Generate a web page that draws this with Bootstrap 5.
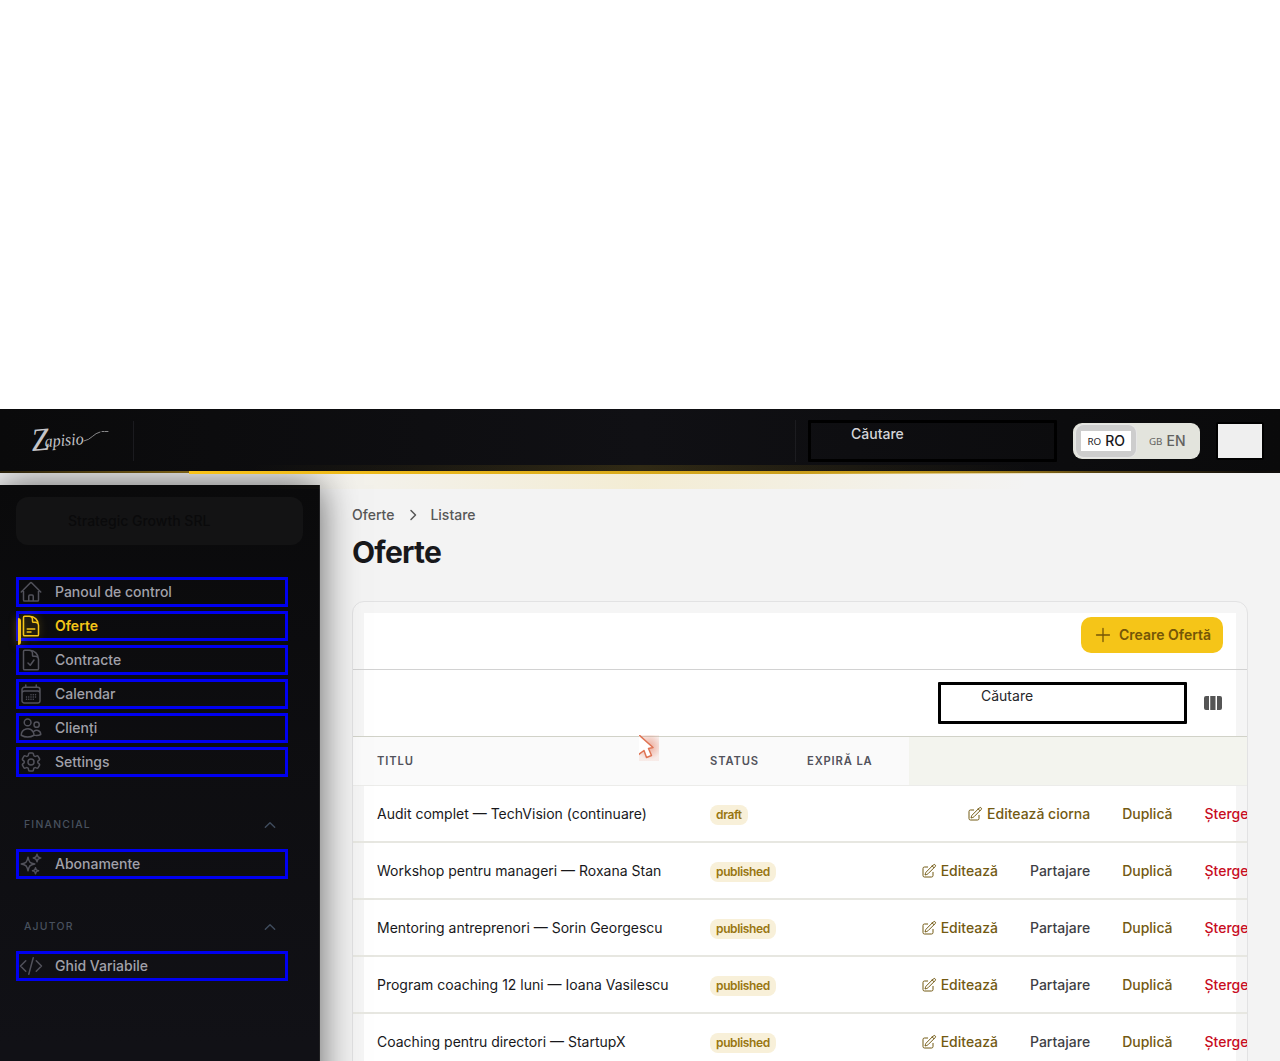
<!DOCTYPE html>
<html lang="ro">
<head>
<meta charset="utf-8">
<meta name="viewport" content="width=device-width, initial-scale=1">
<title>Oferte</title>
<link href="https://cdn.jsdelivr.net/npm/bootstrap@5.3.0/dist/css/bootstrap.min.css" rel="stylesheet">
<style>
html,body{height:1061px;overflow:hidden}
body{font-family:Inter,sans-serif;font-size:14px;line-height:20px;background:#fff;color:#18181b}
svg{fill:none;stroke:currentColor;stroke-width:1.5;stroke-linecap:round;stroke-linejoin:round;flex-shrink:0}
a{text-decoration:none;color:inherit}
.page-top{height:409px}
.topbar{height:64px;background:linear-gradient(90deg,#0a0a0b,#101014 50%,#0a0a0b);z-index:3}
.topbar::before{content:"";position:absolute;left:0;right:0;bottom:0;height:2px;background:linear-gradient(90deg,#2a210b,#7a6017 189px,#ecb91a 190px,#d9a91c 55%,#c99e1c 65%,#6d5516 82%,#0f0d0b 98%)}
.topbar::after{content:"";position:absolute;left:189px;width:900px;bottom:-1px;height:3px;background:linear-gradient(90deg,#f9c31a,#e0b01c 40%,#c99e1c 68%,rgba(201,158,28,0))}
.glow{left:250px;width:780px;top:56px;height:24px;background:linear-gradient(90deg,rgba(245,197,24,0),rgba(245,197,24,.05) 20%,rgba(245,197,24,.14) 50%,rgba(245,197,24,.05) 80%,rgba(245,197,24,0));pointer-events:none}
.brand{width:134px;height:40px;margin-top:12px;border-right:1px solid #1b1b1f;padding-left:28px}
.brand text{font-family:"Liberation Serif",serif;font-style:italic;fill:#c4c4c8;stroke:none}
.top-tools{padding:11px 16px 0 0}
.vline{width:1px;height:42px;background:#1c1c20;margin-right:12px}
.find-box{width:249px;height:42px;border:3px solid #000;border-radius:1px;padding:1px 40px}
.top-tools .find-box{color:#d4d4d8;font-weight:500;margin-right:16px}
.locale{width:127px;height:36px;margin:3px 16px 0 0;padding:2px 3px;border-radius:9px;background:#e3e4dd;font-weight:500;color:#62625f}
.locale small{font-family:"Noto Sans",sans-serif;font-size:9.8px;font-weight:400;margin-right:4px;line-height:20px;position:relative;top:1px}
.locale-on{width:60px;height:32px;border-radius:8px;background:linear-gradient(#fff,#fff) 5px 6px/50px 20px no-repeat,#cdcdcd;box-shadow:0 0 0 1px #e6e6e6;color:#18181b;padding-left:1px}
.locale-off{width:62px;padding-left:2px}
.user-btn{width:48px;height:38px;margin-top:2px;background:#efefef;border:2px solid #000;border-radius:2px;padding:0}
.main-area{height:588px;background:#f3f3f3;overflow:hidden}
.side{width:320px;height:620px;margin-top:12px;background:linear-gradient(180deg,#0a0a0b,#111116 90%);border-right:1px solid #202022;box-shadow:0 0 36px rgba(0,0,0,.62);z-index:1;padding:12px 16px}
.tenant{width:287px;height:48px;border-radius:12px;background:#131314;color:#0a0a0b;font-weight:500;padding:14px 52px;margin-bottom:32px}
.side-link{width:272px;height:30px;border:3px solid #0000f0;color:#a1a1aa;font-weight:500;margin-bottom:4px;gap:12px}
.side-link svg{color:#52525b}
.side-link.on{color:#f5c518;font-weight:600;position:relative}
.side-link.on svg{color:#f5c518;filter:drop-shadow(0 0 4px rgba(245,197,24,.4))}
.side-link.on::before{content:"";position:absolute;left:-1px;top:4px;width:3px;height:27px;background:#f9c31a;box-shadow:0 0 8px rgba(245,197,24,.5);border-radius:0 4px 4px 0}
.side-head{width:272px;height:20px;padding:0 10px 0 8px;color:#48515e;font-size:10.4px;font-weight:500;letter-spacing:1.25px;margin:38px 0 14px}
.side-head svg{color:#3f4b5c;stroke-width:2.2;position:relative;top:-.5px}
.content-col{width:960px;padding:32px 32px 0}
.crumb{color:#575757;font-weight:500;gap:8px}
h1.page-name{font-size:30px;line-height:36px;font-weight:700;letter-spacing:-.75px;margin:9px 0 31px}
.panel{width:896px;height:520px;border:1px solid #e2e2e3;border-radius:12px;overflow:hidden;background:linear-gradient(#fff,#fff) 11px 11px/872px 600px no-repeat,#f5f5f5}
.panel-head{height:68px;border-bottom:1px solid #d2d2d2;padding:15px 24px 0}
.btn-create{width:142px;height:36px;background:#f5c518;color:#745607;font-size:14px;font-weight:600;line-height:20px;border-radius:10px;padding:8px 12px;border:0;gap:6px;white-space:nowrap}
.panel-tools{height:67px;border-bottom:1px solid #d1d2c8;padding:12px 24px 0}
.panel-tools .find-box{margin-right:16px;color:#27272a;font-size:14px}
.cols svg{fill:#555;stroke:none}
.offers{width:908.5px;table-layout:fixed;border-collapse:separate;border-spacing:0}
.offers th{height:49px;padding:0 12px 0 13px;background:#fafafa;border-bottom:1px solid #ececea;font-size:11.2px;font-weight:600;letter-spacing:.86px;color:#52525b}
.offers th:last-child{background:#f3f4ee}
.offers td{height:57px;padding:0 13px;border-bottom:2px solid #e7e7e1;vertical-align:middle;white-space:nowrap}
.offers th:first-child,.offers td:first-child{padding-left:24px}
.tag{display:inline-block;background:#f8f0d9;color:#987611;font-size:12px;font-weight:600;line-height:16px;letter-spacing:-.36px;padding:2px 6px;border-radius:8px;position:relative;top:1px}
.acts{gap:32px;font-weight:500;color:#735a13;justify-content:flex-end}
.acts .edit{gap:4px}
.acts .share{color:#3f3f46}
.acts .del{color:#c80d1e}
.pointer{left:639px;top:735px;width:20px;height:26px;z-index:5;background:radial-gradient(circle at 50% 45%,rgba(225,105,75,.55),rgba(225,105,75,.1) 75%)}
</style>
<script src="https://cdn.jsdelivr.net/npm/bootstrap@5.3.0/dist/js/bootstrap.bundle.min.js"></script>
</head>
<body>
<svg class="d-none">
<symbol id="pencil" viewBox="0 0 24 24"><path d="m16.862 4.487 1.687-1.688a1.875 1.875 0 1 1 2.652 2.652L10.582 16.07a4.5 4.5 0 0 1-1.897 1.13L6 18l.8-2.685a4.5 4.5 0 0 1 1.13-1.897l8.932-8.931Zm0 0L19.5 7.125M18 14v4.75A2.25 2.25 0 0 1 15.75 21H5.25A2.25 2.25 0 0 1 3 18.75V8.25A2.25 2.25 0 0 1 5.25 6H10"/></symbol>
<symbol id="up" viewBox="0 0 24 24"><path d="m5 15.500 7-7 7 7"/></symbol>
</svg>
<div class="page-top"></div>
<header class="topbar position-relative d-flex justify-content-between">
  <div class="glow position-absolute"></div>
  <a class="brand" href="#"><svg width="84" height="40" viewBox="0 0 84 40"><text x="4" y="30" font-size="32" textLength="18" lengthAdjust="spacingAndGlyphs" transform="rotate(-5 4 30)">Z</text><text x="17" y="26" font-size="17" textLength="39" lengthAdjust="spacingAndGlyphs" transform="rotate(-4 17 26)">apisio</text><path d="M56 20C63 19 66 12 72 11M74 10.500h2M77 10.500h3" stroke="#a7a7aa" stroke-width=".8"/></svg></a>
  <div class="top-tools d-flex">
    <div class="vline"></div>
    <div class="find-box">Căutare</div>
    <div class="locale d-flex">
      <div class="locale-on d-flex align-items-center justify-content-center"><small>RO</small>RO</div>
      <div class="locale-off d-flex align-items-center justify-content-center"><small>GB</small>EN</div>
    </div>
    <button class="user-btn" aria-label="Cont"></button>
  </div>
</header>
<div class="main-area d-flex">
  <aside class="side position-relative flex-shrink-0">
    <div class="tenant">Strategic Growth SRL</div>
    <nav>
      <a class="side-link d-flex align-items-center" href="#"><svg width="24" height="24" viewBox="0 0 24 24"><path d="m2.250 12 8.954-8.955a1.126 1.126 0 0 1 1.591 0L21.750 12M4.500 9.750v10.125c0 .621.504 1.125 1.125 1.125H9.750v-4.875c0-.621.504-1.125 1.125-1.125h2.250c.621 0 1.125.504 1.125 1.125V21h4.125c.621 0 1.125-.504 1.125-1.125V9.750M8.250 21h8.250"/></svg>Panoul de control</a>
      <a class="side-link on d-flex align-items-center" href="#"><svg width="24" height="24" viewBox="0 0 24 24"><path d="M19.500 14.250v-2.625a3.375 3.375 0 0 0-3.375-3.375h-1.500A1.125 1.125 0 0 1 13.500 7.125v-1.500a3.375 3.375 0 0 0-3.375-3.375H8.250m0 12.750h7.500m-7.500 3H12M10.500 2.250H5.625c-.621 0-1.125.504-1.125 1.125v17.250c0 .621.504 1.125 1.125 1.125h12.750c.621 0 1.125-.504 1.125-1.125V11.250a9 9 0 0 0-9-9Z"/></svg>Oferte</a>
      <a class="side-link d-flex align-items-center" href="#"><svg width="24" height="24" viewBox="0 0 24 24"><path d="M10.125 2.250h-4.500c-.621 0-1.125.504-1.125 1.125v17.250c0 .621.504 1.125 1.125 1.125h12.750c.621 0 1.125-.504 1.125-1.125v-9M10.125 2.250h.375a9 9 0 0 1 9 9v.375M10.125 2.250A3.375 3.375 0 0 1 13.500 5.625v1.500c0 .621.504 1.125 1.125 1.125h1.500a3.375 3.375 0 0 1 3.375 3.375M9 15l2.250 2.250L15 12"/></svg>Contracte</a>
      <a class="side-link d-flex align-items-center" href="#"><svg width="24" height="24" viewBox="0 0 24 24"><path d="M6.750 3v2.250M17.250 3v2.250M3 18.750V7.500a2.250 2.250 0 0 1 2.250-2.250h13.500A2.250 2.250 0 0 1 21 7.500v11.250m-18 0A2.250 2.250 0 0 0 5.250 21h13.500A2.250 2.250 0 0 0 21 18.750m-18 0v-7.500A2.250 2.250 0 0 1 5.250 9h13.500A2.250 2.250 0 0 1 21 11.250v7.500m-9-6h.008v.008H12v-.008ZM12 15h.008v.008H12V15Zm0 2.250h.008v.008H12v-.008ZM9.750 15h.008v.008H9.750V15Zm0 2.250h.008v.008H9.750v-.008ZM7.500 15h.008v.008H7.500V15Zm0 2.250h.008v.008H7.500v-.008Zm6.750-4.500h.008v.008h-.008v-.008Zm0 2.250h.008v.008h-.008V15Zm0 2.250h.008v.008h-.008v-.008Zm2.250-4.500h.008v.008H16.500v-.008Zm0 2.250h.008v.008H16.500V15Z"/></svg>Calendar</a>
      <a class="side-link d-flex align-items-center" href="#"><svg width="24" height="24" viewBox="0 0 24 24"><path d="M15 19.128a9.380 9.380 0 0 0 2.625.372 9.337 9.337 0 0 0 4.121-.952 4.125 4.125 0 0 0-7.533-2.493M15 19.128v-.003c0-1.113-.285-2.160-.786-3.070M15 19.128v.106A12.318 12.318 0 0 1 8.624 21c-2.331 0-4.512-.645-6.374-1.766l-.001-.109a6.375 6.375 0 0 1 11.964-3.070M12 6.375a3.375 3.375 0 1 1-6.750 0 3.375 3.375 0 0 1 6.750 0Zm8.250 2.250a2.625 2.625 0 1 1-5.250 0 2.625 2.625 0 0 1 5.250 0Z"/></svg>Clienți</a>
      <a class="side-link d-flex align-items-center" href="#"><svg width="24" height="24" viewBox="0 0 24 24"><path d="M9.594 3.940c.090-.542.560-.940 1.110-.940h2.593c.550 0 1.020.398 1.110.940l.213 1.281c.063.374.313.686.645.870.074.040.147.083.220.127.325.196.720.257 1.075.124l1.217-.456a1.125 1.125 0 0 1 1.370.490l1.296 2.247a1.125 1.125 0 0 1-.260 1.431l-1.003.827c-.293.241-.438.613-.430.992a7.723 7.723 0 0 1 0 .255c-.008.378.137.750.430.991l1.004.827c.424.350.534.955.260 1.430l-1.298 2.247a1.125 1.125 0 0 1-1.369.491l-1.217-.456c-.355-.133-.750-.072-1.076.124a6.470 6.470 0 0 1-.220.128c-.331.183-.581.495-.644.869l-.213 1.281c-.090.543-.560.940-1.110.940h-2.594c-.550 0-1.019-.398-1.110-.940l-.213-1.281c-.062-.374-.312-.686-.644-.870a6.520 6.520 0 0 1-.220-.127c-.325-.196-.720-.257-1.076-.124l-1.217.456a1.125 1.125 0 0 1-1.369-.490l-1.297-2.247a1.125 1.125 0 0 1 .260-1.431l1.004-.827c.292-.240.437-.613.430-.991a6.932 6.932 0 0 1 0-.255c.007-.380-.138-.751-.430-.992l-1.004-.827a1.125 1.125 0 0 1-.260-1.430l1.297-2.247a1.125 1.125 0 0 1 1.370-.491l1.216.456c.356.133.751.072 1.076-.124.072-.044.146-.086.220-.128.332-.183.582-.495.644-.869l.214-1.280Z"/><circle cx="12" cy="12" r="3"/></svg>Settings</a>
      <div class="side-head d-flex justify-content-between align-items-center">FINANCIAL<svg width="16" height="16"><use href="#up"/></svg></div>
      <a class="side-link d-flex align-items-center" href="#"><svg width="24" height="24" viewBox="0 0 24 24"><path d="M9.813 15.904 9 18.750l-.813-2.846a4.500 4.500 0 0 0-3.090-3.090L2.250 12l2.846-.813a4.500 4.500 0 0 0 3.090-3.090L9 5.250l.813 2.846a4.500 4.500 0 0 0 3.090 3.090L15.750 12l-2.846.813a4.500 4.500 0 0 0-3.090 3.090ZM18.259 8.715 18 9.750l-.259-1.035a3.375 3.375 0 0 0-2.455-2.456L14.250 6l1.036-.259a3.375 3.375 0 0 0 2.455-2.456L18 2.250l.259 1.035a3.375 3.375 0 0 0 2.456 2.456L21.750 6l-1.035.259a3.375 3.375 0 0 0-2.456 2.456ZM16.894 20.567 16.500 21.750l-.394-1.183a2.250 2.250 0 0 0-1.423-1.423L13.500 18.750l1.183-.394a2.250 2.250 0 0 0 1.423-1.423l.394-1.183.394 1.183a2.250 2.250 0 0 0 1.423 1.423l1.183.394-1.183.394a2.250 2.250 0 0 0-1.423 1.423Z"/></svg>Abonamente</a>
      <div class="side-head d-flex justify-content-between align-items-center">AJUTOR<svg width="16" height="16"><use href="#up"/></svg></div>
      <a class="side-link d-flex align-items-center" href="#"><svg width="24" height="24" viewBox="0 0 24 24"><path d="M17.250 6.750 22.500 12l-5.250 5.250m-10.500 0L1.500 12l5.250-5.250m7.500-3-4.500 16.500"/></svg>Ghid Variabile</a>
    </nav>
  </aside>
  <main class="content-col">
    <div class="crumb d-flex align-items-center"><span>Oferte</span><svg width="20" height="20" viewBox="0 0 20 20"><path d="m9 5.500 4.500 4.500L9 14.500"/></svg><span>Listare</span></div>
    <h1 class="page-name">Oferte</h1>
    <section class="panel">
      <div class="panel-head d-flex justify-content-end"><button class="btn btn-create d-flex align-items-center"><svg width="20" height="20" viewBox="0 0 20 20"><path d="M10 3.500v13M3.500 10h13" stroke-width="1.300"/></svg>Creare Ofertă</button></div>
      <div class="panel-tools d-flex justify-content-end"><div class="find-box">Căutare</div><span class="cols"><svg width="20" height="42" viewBox="0 0 20 42"><path d="M6 14v14H3a2 2 0 0 1-2-2V16a2 2 0 0 1 2-2ZM7.250 14h5.250v14H7.250ZM14 14h3a2 2 0 0 1 2 2v10a2 2 0 0 1-2 2h-3Z"/></svg></span></div>
      <table class="offers">
        <colgroup><col style="width:344px"><col style="width:97px"><col style="width:115px"><col></colgroup>
        <thead><tr><th>TITLU</th><th>STATUS</th><th>EXPIRĂ LA</th><th></th></tr></thead>
        <tbody>
          <tr><td>Audit complet — TechVision (continuare)</td><td><span class="tag">draft</span></td><td></td><td><div class="acts d-flex"><a class="edit d-flex align-items-center" href="#"><svg width="16" height="16"><use href="#pencil"/></svg>Editează ciorna</a><a href="#">Duplică</a><a class="del" href="#">Șterge</a></div></td></tr>
          <tr><td>Workshop pentru manageri — Roxana Stan</td><td><span class="tag">published</span></td><td></td><td><div class="acts d-flex"><a class="edit d-flex align-items-center" href="#"><svg width="16" height="16"><use href="#pencil"/></svg>Editează</a><a class="share" href="#">Partajare</a><a href="#">Duplică</a><a class="del" href="#">Șterge</a></div></td></tr>
          <tr><td>Mentoring antreprenori — Sorin Georgescu</td><td><span class="tag">published</span></td><td></td><td><div class="acts d-flex"><a class="edit d-flex align-items-center" href="#"><svg width="16" height="16"><use href="#pencil"/></svg>Editează</a><a class="share" href="#">Partajare</a><a href="#">Duplică</a><a class="del" href="#">Șterge</a></div></td></tr>
          <tr><td>Program coaching 12 luni — Ioana Vasilescu</td><td><span class="tag">published</span></td><td></td><td><div class="acts d-flex"><a class="edit d-flex align-items-center" href="#"><svg width="16" height="16"><use href="#pencil"/></svg>Editează</a><a class="share" href="#">Partajare</a><a href="#">Duplică</a><a class="del" href="#">Șterge</a></div></td></tr>
          <tr><td>Coaching pentru directori — StartupX</td><td><span class="tag">published</span></td><td></td><td><div class="acts d-flex"><a class="edit d-flex align-items-center" href="#"><svg width="16" height="16"><use href="#pencil"/></svg>Editează</a><a class="share" href="#">Partajare</a><a href="#">Duplică</a><a class="del" href="#">Șterge</a></div></td></tr>
        </tbody>
      </table>
    </section>
  </main>
</div>
<svg class="pointer position-absolute" viewBox="0 0 20 26"><path d="M-1-1 14 12.500 9.500 13.500 12.500 20.500 7.500 22.500 5 15.500-1 20Z" fill="#fff" stroke="#df7454" stroke-width="1.500"/></svg>
</body>
</html>
